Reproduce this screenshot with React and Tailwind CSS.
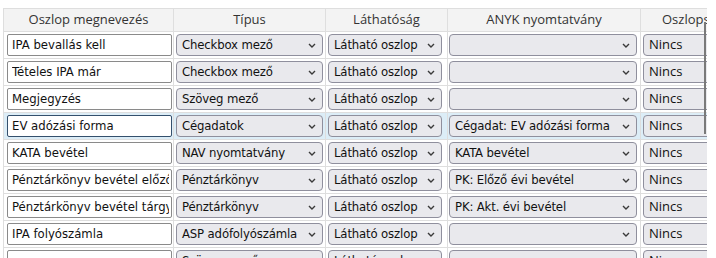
import React from "react";

const rows = [
  { name: "IPA bevallás kell", type: "Checkbox mező", vis: "Látható oszlop", anyk: "", col: "Nincs" },
  { name: "Tételes IPA már", type: "Checkbox mező", vis: "Látható oszlop", anyk: "", col: "Nincs" },
  { name: "Megjegyzés", type: "Szöveg mező", vis: "Látható oszlop", anyk: "", col: "Nincs" },
  { name: "EV adózási forma", type: "Cégadatok", vis: "Látható oszlop", anyk: "Cégadat: EV adózási forma", col: "Nincs", hl: true },
  { name: "KATA bevétel", type: "NAV nyomtatvány", vis: "Látható oszlop", anyk: "KATA bevétel", col: "Nincs" },
  { name: "Pénztárkönyv bevétel előző évi", type: "Pénztárkönyv", vis: "Látható oszlop", anyk: "PK: Előző évi bevétel", col: "Nincs" },
  { name: "Pénztárkönyv bevétel tárgyévi", type: "Pénztárkönyv", vis: "Látható oszlop", anyk: "PK: Akt. évi bevétel", col: "Nincs" },
  { name: "IPA folyószámla", type: "ASP adófolyószámla", vis: "Látható oszlop", anyk: "", col: "Nincs" },
  { name: "", type: "Szöveg mező", vis: "Látható oszlop", anyk: "", col: "Nincs" },
];

const ctl = "font-['DejaVu_Sans_Condensed','DejaVu_Sans',sans-serif] text-[13px] text-[#111]";

function Chevron() {
  return (
    <svg width="8" height="5" viewBox="0 0 8 5" className="shrink-0 ml-[3px]">
      <path d="M1 1 L4 4 L7 1" fill="none" stroke="#3a3a3a" strokeWidth="1.4" />
    </svg>
  );
}

function Select({ value, w, bold }) {
  return (
    <div
      className={`h-[22px] flex items-center justify-between pl-[5px] pr-[6px] rounded-[4px] border border-[#8f8f9d] bg-[#e9e9ed] overflow-hidden ${w}`}
    >
      <span
        className={
          bold
            ? "font-['Open_Sans',sans-serif] font-medium text-[13px] text-[#111] whitespace-nowrap"
            : `${ctl} whitespace-nowrap tracking-[-0.15px]`
        }
      >
        {value}
      </span>
      {!bold && <Chevron />}
    </div>
  );
}

const head = "h-[24px] flex items-center justify-center border-r border-b border-t border-[#dedede] bg-[#f3f3f3] font-['Open_Sans',sans-serif] text-[13px] text-[#333] whitespace-nowrap overflow-hidden";

export default function App() {
  return (
    <div className="relative w-[716px] h-[258px] overflow-hidden bg-white">
      <div className="pt-[8px] pl-[3px] w-[707px] overflow-hidden">
        <div className="grid grid-cols-[171px_152px_122px_193px_140px] w-[778px]">
          <div className={`${head} border-l`}>Oszlop megnevezés</div>
          <div className={head}>Típus</div>
          <div className={head}>Láthatóság</div>
          <div className={head}>ANYK nyomtatvány</div>
          <div className={`${head} justify-start pl-[21px]`}>Oszlopszám</div>

          {rows.map((r, i) => (
            <div key={i} className="contents">
              <div className={`border-l border-r border-b border-[#dedede] py-[2px] pl-[3px] ${r.hl ? "bg-[#dcedf7]" : ""}`}>
                <div
                  className={`h-[22px] w-[165px] rounded-[2px] border bg-white flex items-center pl-[4px] overflow-hidden whitespace-nowrap ${ctl} ${r.hl ? "border-[#34506d]" : "border-[#8a8a8a]"}`}
                >
                  <span className="block overflow-hidden w-[157px]">{r.name}</span>
                </div>
              </div>
              <div className={`border-r border-b border-[#dedede] py-[2px] pl-[2px] ${r.hl ? "bg-[#dcedf7]" : ""}`}>
                <Select value={r.type} w="w-[147px]" />
              </div>
              <div className={`border-r border-b border-[#dedede] py-[2px] pl-[2px] ${r.hl ? "bg-[#dcedf7]" : ""}`}>
                <Select value={r.vis} w="w-[114px]" />
              </div>
              <div className={`border-r border-b border-[#dedede] py-[2px] pl-[1px] ${r.hl ? "bg-[#dcedf7]" : ""}`}>
                <Select value={r.anyk} w="w-[188px]" />
              </div>
              <div className={`border-r border-b border-[#dedede] py-[2px] pl-[2px] ${r.hl ? "bg-[#dcedf7]" : ""}`}>
                <Select value={r.col} w="w-[120px]" bold />
              </div>
            </div>
          ))}
        </div>
      </div>
      <div className="absolute left-[704px] top-[22px] w-[2px] h-[112px] bg-[#7a7a7a]" />
    </div>
  );
}
